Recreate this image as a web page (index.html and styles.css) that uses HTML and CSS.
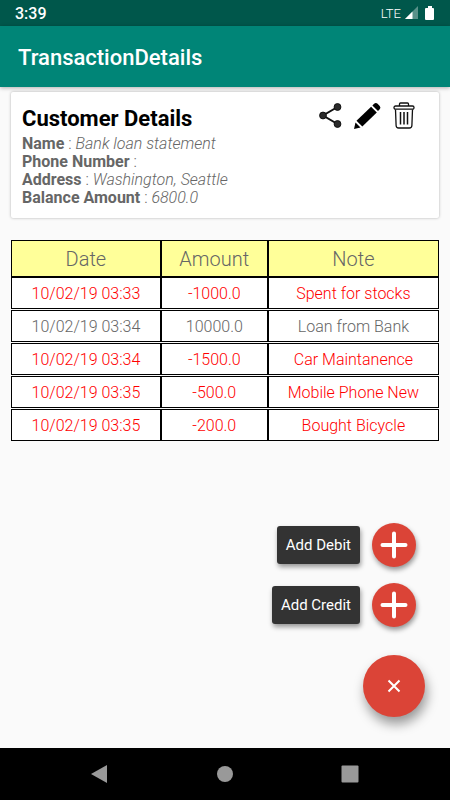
FILE: index.html
```html
<!DOCTYPE html>
<html lang="en">
<head>
<meta charset="utf-8">
<meta name="viewport" content="width=device-width, initial-scale=1">
<title>TransactionDetails</title>
<link rel="stylesheet" href="styles.css">
</head>
<body>
<div class="status-bar">
  <span class="clock">3:39</span>
  <div class="status-icons">
    <span class="network">LTE</span>
    <svg width="14" height="14" viewBox="0 0 14 14" aria-hidden="true"><path d="M14 0v13H1z" fill="#fff" opacity=".35"/><path d="M8.500 5.500V13H1z" fill="#fff"/></svg>
    <svg class="battery" width="10" height="15" viewBox="0 0 10 15" aria-hidden="true"><path d="M3 0h4v2h1q1 0 1 1v10q0 1-1 1H1q-1 0-1-1V3q0-1 1-1h2z" fill="#fff"/></svg>
  </div>
</div>
<header class="app-bar"><h1>TransactionDetails</h1></header>
<main>
  <section class="card">
    <div class="card-head">
      <h2>Customer Details</h2>
      <div class="actions">
        <button type="button" aria-label="Share"><svg width="24" height="26" viewBox="0 0 24 26"><path d="M18.500 5 4 13.500 18.500 22" fill="none" stroke="#111" stroke-width="2"/><g fill="#2b2b2b" stroke="#111"><circle cx="18.500" cy="5" r="3.400"/><circle cx="4" cy="13.500" r="3.400"/><circle cx="18.500" cy="22" r="3.400"/></g></svg></button>
        <button type="button" aria-label="Edit"><svg width="28" height="28" viewBox="0 0 28 28"><path d="m0 27 1.500-6.500 5 5z"/><path d="M2.500 18.700 17.100 4.800l5.700 5.700L8.300 24.500z"/><path d="m18.400 3.500 1.700-1.700q1.800-1.600 3.500 0L25.700 3.900q1.500 1.700 0 3.300l-1.700 1.900z"/></svg></button>
        <button type="button" aria-label="Delete"><svg width="22" height="27" viewBox="0 0 22 27" fill="none" stroke="#111" stroke-width="1.300"><path d="M6.500 4V2q0-1 1-1h7q1 0 1 1v2"/><rect x="1" y="4" width="20" height="3.200" rx="1.500"/><path d="m2.500 7.500.6 16q.1 2.500 2.500 2.500h10.800q2.400 0 2.500-2.500l.6-16"/><path d="M7.500 10v12.500M11 10v12.500M14.500 10v12.500" stroke-width="1.500"/></svg></button>
      </div>
    </div>
    <p><b>Name</b> : <i>Bank loan statement</i></p>
    <p><b>Phone Number</b> :</p>
    <p><b>Address</b> : <i>Washington, Seattle</i></p>
    <p><b>Balance Amount</b> : <i>6800.0</i></p>
  </section>
  <table>
    <thead><tr><th class="date" scope="col">Date</th><th class="amount" scope="col">Amount</th><th class="note" scope="col">Note</th></tr></thead>
    <tbody>
      <tr class="debit"><td>10/02/19 03:33</td><td>-1000.0</td><td>Spent for stocks</td></tr>
      <tr><td>10/02/19 03:34</td><td>10000.0</td><td>Loan from Bank</td></tr>
      <tr class="debit"><td>10/02/19 03:34</td><td>-1500.0</td><td>Car Maintanence</td></tr>
      <tr class="debit"><td>10/02/19 03:35</td><td>-500.0</td><td>Mobile Phone New</td></tr>
      <tr class="debit"><td>10/02/19 03:35</td><td>-200.0</td><td>Bought Bicycle</td></tr>
    </tbody>
  </table>
  <div class="fab-menu">
    <div class="fab-item">
      <label for="debit">Add Debit</label>
      <button id="debit" class="fab" type="button"><svg width="44" height="44" viewBox="0 0 44 44" aria-hidden="true"><path d="M22 10.500v23M10.500 22h23" stroke="#fff" stroke-width="4" stroke-linecap="round"/></svg></button>
    </div>
    <div class="fab-item">
      <label for="credit">Add Credit</label>
      <button id="credit" class="fab" type="button"><svg width="44" height="44" viewBox="0 0 44 44" aria-hidden="true"><path d="M22 10.500v23M10.500 22h23" stroke="#fff" stroke-width="4" stroke-linecap="round"/></svg></button>
    </div>
    <button class="fab fab-main" type="button" aria-label="Close menu"><svg width="14" height="14" viewBox="0 0 14 14"><path d="m1.500 1.500 11 11M12.500 1.500l-11 11" stroke="#fff" stroke-width="2"/></svg></button>
  </div>
</main>
<nav class="nav-bar">
  <button type="button" aria-label="Back"><svg width="18" height="20" viewBox="0 0 18 20"><path d="M16 1v18L0 10z"/></svg></button>
  <button type="button" aria-label="Home"><svg width="18" height="18" viewBox="0 0 18 18"><circle cx="9" cy="9" r="8"/></svg></button>
  <button type="button" aria-label="Recent apps"><svg width="18" height="18" viewBox="0 0 18 18"><rect x=".5" y=".5" width="17" height="17" rx="1"/></svg></button>
</nav>
</body>
</html>
```
FILE: styles.css
```css
* { box-sizing: border-box; }
body {
  margin: 0;
  min-height: 100vh;
  display: flex;
  flex-direction: column;
  background: #fafafa;
  color: #666;
  font-family: Roboto, "Liberation Sans", sans-serif;
  font-size: 16px;
}
h1, h2, p { margin: 0; }
button { border: 0; padding: 0; background: none; display: grid; place-items: center; }
svg { display: block; }
.status-bar {
  height: 26px;
  padding: 0 15px;
  display: flex;
  align-items: center;
  justify-content: space-between;
  background: #00574b;
  color: #fff;
}
.clock { font-weight: 500; }
.status-icons { display: flex; align-items: center; gap: 3px; }
.network { font-size: 13px; font-weight: 300; }
.battery { margin-left: 4px; }
.app-bar {
  height: 61px;
  padding: 2px 18px 0;
  display: flex;
  align-items: center;
  background: #008577;
  color: #fff;
  box-shadow: 0 1px 4px rgba(0, 0, 0, .3);
}
.app-bar h1 { font-size: 22px; font-weight: 500; }
main {
  flex: 1;
  display: flex;
  flex-direction: column;
  padding: 5px 11px 0;
}
.card {
  padding: 10px 24px 11px 11px;
  background: #fff;
  border-radius: 2px;
  box-shadow: 0 0 3px rgba(0, 0, 0, .3);
}
.card-head { display: flex; align-items: flex-start; justify-content: space-between; height: 33px; }
.card-head h2 { color: #000; font-size: 22px; font-weight: 700; line-height: 34px; }
.actions { display: flex; align-items: flex-start; gap: 11px; }
.card p { line-height: 18px; font-weight: 300; }
.card b { font-weight: 700; }
table {
  width: 100%;
  margin-top: 21px;
  table-layout: fixed;
  border-spacing: 0 1px;
  text-align: center;
}
th, td { border: 1px solid #000; padding: 0; }
th {
  height: 36px;
  border-bottom: 0;
  box-shadow: 0 1px 0 #000;
  background: #ffff99;
  font-size: 20px;
  font-weight: 300;
}
td { height: 32px; background: #fff; font-weight: 300; }
.date { width: 35%; }
.amount { width: 25%; }
.note { width: 40%; }
.debit { color: #f00; }
.fab-menu {
  margin: auto 14px 31px auto;
  display: flex;
  flex-direction: column;
  align-items: flex-end;
  gap: 16px;
}
.fab-item { display: flex; align-items: center; gap: 12px; margin-right: 9px; }
.fab-item label {
  padding: 0 9px;
  font-size: 15px;
  line-height: 38px;
  border-radius: 3px;
  background: #333;
  color: #fff;
  box-shadow: 1px 3px 5px rgba(0, 0, 0, .4);
}
.fab {
  width: 44px;
  height: 44px;
  border-radius: 50%;
  background: #db4437;
  box-shadow: 1px 3px 5px rgba(0, 0, 0, .4);
}
.fab-main {
  width: 62px;
  height: 62px;
  margin-top: 12px;
  box-shadow: 2px 7px 12px rgba(0, 0, 0, .4);
}
.nav-bar {
  height: 52px;
  padding: 0 37px;
  display: grid;
  grid-template-columns: repeat(3, 1fr);
  align-items: center;
  background: #000;
}
.nav-bar svg { fill: #999; }
```
